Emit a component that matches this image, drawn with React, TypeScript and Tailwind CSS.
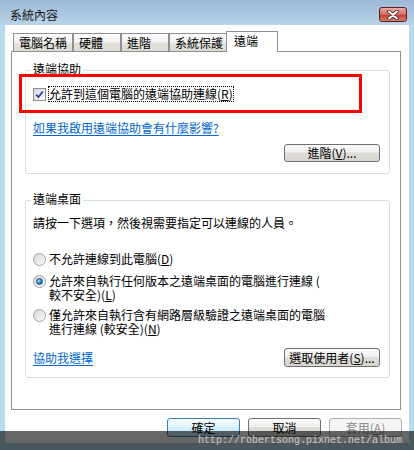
import type { ReactNode } from "react";

const tabs = [
  { label: "電腦名稱", w: "w-[60px]" },
  { label: "硬體", w: "w-[48px]" },
  { label: "進階", w: "w-[48px]" },
  { label: "系統保護", w: "w-[58px]" },
];

function Key({ k }: { k: string }) {
  return (
    <>
      (<span className="underline underline-offset-1">{k}</span>)
    </>
  );
}

function Button({
  children,
  w,
  h = "h-[19px]",
  kind = "normal",
}: {
  children: ReactNode;
  w: string;
  h?: string;
  kind?: "normal" | "default" | "disabled";
}) {
  const look =
    kind === "default"
      ? "border-[#3c7fb1] bg-[linear-gradient(#f2fafe_0%,#e3f4fd_50%,#d4eefc_50%,#c6e8fb_100%)] text-black"
      : kind === "disabled"
        ? "border-[#adb2b5] bg-[#f4f4f4] text-[#8d8d8d]"
        : "border-[#707070] bg-[linear-gradient(#fbfbfb_0%,#efefef_45%,#dedcd6_50%,#d8d6cf_100%)] text-black";
  return (
    <div className={`flex items-center justify-center rounded-[3px] border leading-[16px] ${w} ${h} ${look}`}>
      {children}
    </div>
  );
}

function Radio({ checked = false }: { checked?: boolean }) {
  return (
    <div className="flex h-[13px] w-[13px] shrink-0 items-center justify-center rounded-full border border-[#a2a2a2] bg-[linear-gradient(135deg,#d4d4d4,#fdfdfd)]">
      {checked && (
        <div className="h-[7px] w-[7px] rounded-full border border-[#1a4f8f] bg-[radial-gradient(circle_at_35%_35%,#9fdcff,#2c7ad6_55%,#0b3a7c)]" />
      )}
    </div>
  );
}

function Group({ title, h, children }: { title: string; h: string; children: ReactNode }) {
  return (
    <div className={`relative ml-[13px] mr-[10px] flex flex-col rounded-[3px] border border-[#d5dfe5] ${h}`}>
      <span className="absolute -top-[10px] left-[5px] bg-white px-[2px] leading-[16px]">{title}</span>
      {children}
    </div>
  );
}

export default function App() {
  return (
    <div className="relative flex h-[450px] w-[414px] flex-col overflow-hidden bg-[#b5dcec] font-['Noto_Sans_CJK_TC','Noto_Sans',sans-serif] text-[12px] text-black">
      {/* title bar */}
      <div className="flex h-[25px] items-start justify-between bg-[linear-gradient(#9cb9d5,#bad3e8)] pl-[10px] pr-[7px] pt-[7px]">
        <span className="leading-[16px] text-[#1a1a1a]">系統內容</span>
        <div className="flex h-[15px] w-[28px] items-center justify-center rounded-[3px] border border-[#5a1e1e] bg-[linear-gradient(#eab0a8,#d4675c_50%,#c2402f_55%,#d8806e)]">
          <svg width="14" height="10" viewBox="0 0 14 10">
            <path d="M3 1.5 L11 8.5 M11 1.5 L3 8.5" stroke="#3a2a2a" strokeWidth="3.6" strokeLinecap="round" />
            <path d="M3 1.5 L11 8.5 M11 1.5 L3 8.5" stroke="#ffffff" strokeWidth="2" strokeLinecap="round" />
          </svg>
        </div>
      </div>

      {/* client */}
      <div className="mx-[5px] flex h-[418px] flex-col bg-white">
        <div className="relative z-10 mt-[6px] -mb-px flex h-[21px] items-end pl-[8px]">
          {tabs.map((t) => (
            <div
              key={t.label}
              className={`mb-px flex h-[18px] items-center border-x border-t border-[#8e9096] bg-[linear-gradient(#fdfdfd_0%,#f4f4f4_45%,#e4e3dc_55%,#dcdbd3_100%)] pl-[5px] leading-[16px] ${t.w}`}
            >
              {t.label}
            </div>
          ))}
          <div className="-ml-px flex h-[21px] w-[52px] items-start border-x border-t border-[#8e9096] bg-white pl-[7px] pt-[1px] leading-[16px]">
            遠端
          </div>
        </div>

        <div className="ml-[6px] mr-[8px] flex h-[359px] flex-col border border-[#8e9096]">
          <div className="relative mt-[18px]">
            <Group title="遠端協助" h="h-[104px]">
              <div className="ml-[7px] mt-[15px] flex h-[16px] items-center gap-[2px]">
                <div className="flex h-[13px] w-[13px] items-center justify-center border border-[#8f8f8f] bg-[linear-gradient(135deg,#d6d8e0,#fbfbfb)]">
                  <svg width="9" height="9" viewBox="0 0 9 9">
                    <path d="M1.2 4.6 L3.4 7 L7.8 1.6" stroke="#2b3f96" strokeWidth="1.7" fill="none" />
                  </svg>
                </div>
                <span className="border border-dotted border-black leading-[14px]">
                  允許到這個電腦的遠端協助連線<Key k="R" />
                </span>
              </div>
              <span className="ml-[7px] mt-[18px] w-fit leading-[16px] text-[#0066cc] underline underline-offset-2">
                如果我啟用遠端協助會有什麼影響?
              </span>
              <div className="mt-[8px] flex justify-end pr-[9px]">
                <Button w="w-[96px]" h="h-[18px]">
                  進階<Key k="V" />...
                </Button>
              </div>
            </Group>
            {/* red annotation */}
            <div className="pointer-events-none absolute left-[7px] top-[4px] h-[39px] w-[343px] border-[3px] border-[#ff0000]" />
          </div>

          <div className="mt-[26px]">
            <Group title="遠端桌面" h="h-[178px]">
              <p className="ml-[7px] mt-[14px] leading-[16px]">請按一下選項，然後視需要指定可以連線的人員。</p>
              <div className="ml-[7px] mt-[20px] flex items-center gap-[3px] leading-[16px]">
                <Radio />
                <span>
                  不允許連線到此電腦<Key k="D" />
                </span>
              </div>
              <div className="ml-[7px] mt-[7px] flex items-start gap-[3px] leading-[14px]">
                <div className="mt-[1px]">
                  <Radio checked />
                </div>
                <span>
                  允許來自執行任何版本之遠端桌面的電腦進行連線 (
                  <br />
                  較不安全)<Key k="L" />
                </span>
              </div>
              <div className="ml-[7px] mt-[6px] flex items-start gap-[3px] leading-[14px]">
                <div className="mt-[1px]">
                  <Radio />
                </div>
                <span>
                  僅允許來自執行含有網路層級驗證之遠端桌面的電腦
                  <br />
                  進行連線 (較安全)<Key k="N" />
                </span>
              </div>
              <div className="ml-[7px] mt-[12px] flex h-[19px] items-center justify-between pr-[9px]">
                <span className="leading-[16px] text-[#0066cc] underline underline-offset-2">協助我選擇</span>
                <Button w="w-[96px]">
                  選取使用者<Key k="S" />...
                </Button>
              </div>
            </Group>
          </div>
        </div>

        <div className="mt-[8px] flex justify-end gap-[8px] pr-[7px]">
          <Button w="w-[73px]" kind="default">
            確定
          </Button>
          <Button w="w-[73px]">取消</Button>
          <Button w="w-[73px]" kind="disabled">
            套用<Key k="A" />
          </Button>
        </div>
      </div>

      {/* watermark strip */}
      <div className="absolute bottom-0 left-0 right-0 flex h-[19px] items-center justify-end bg-black/60 pr-[12px]">
        <span className="font-['Liberation_Mono',monospace] text-[10px] leading-[12px] text-[#c8c8c8]">
          http://robertsong.pixnet.net/album
        </span>
      </div>
    </div>
  );
}
